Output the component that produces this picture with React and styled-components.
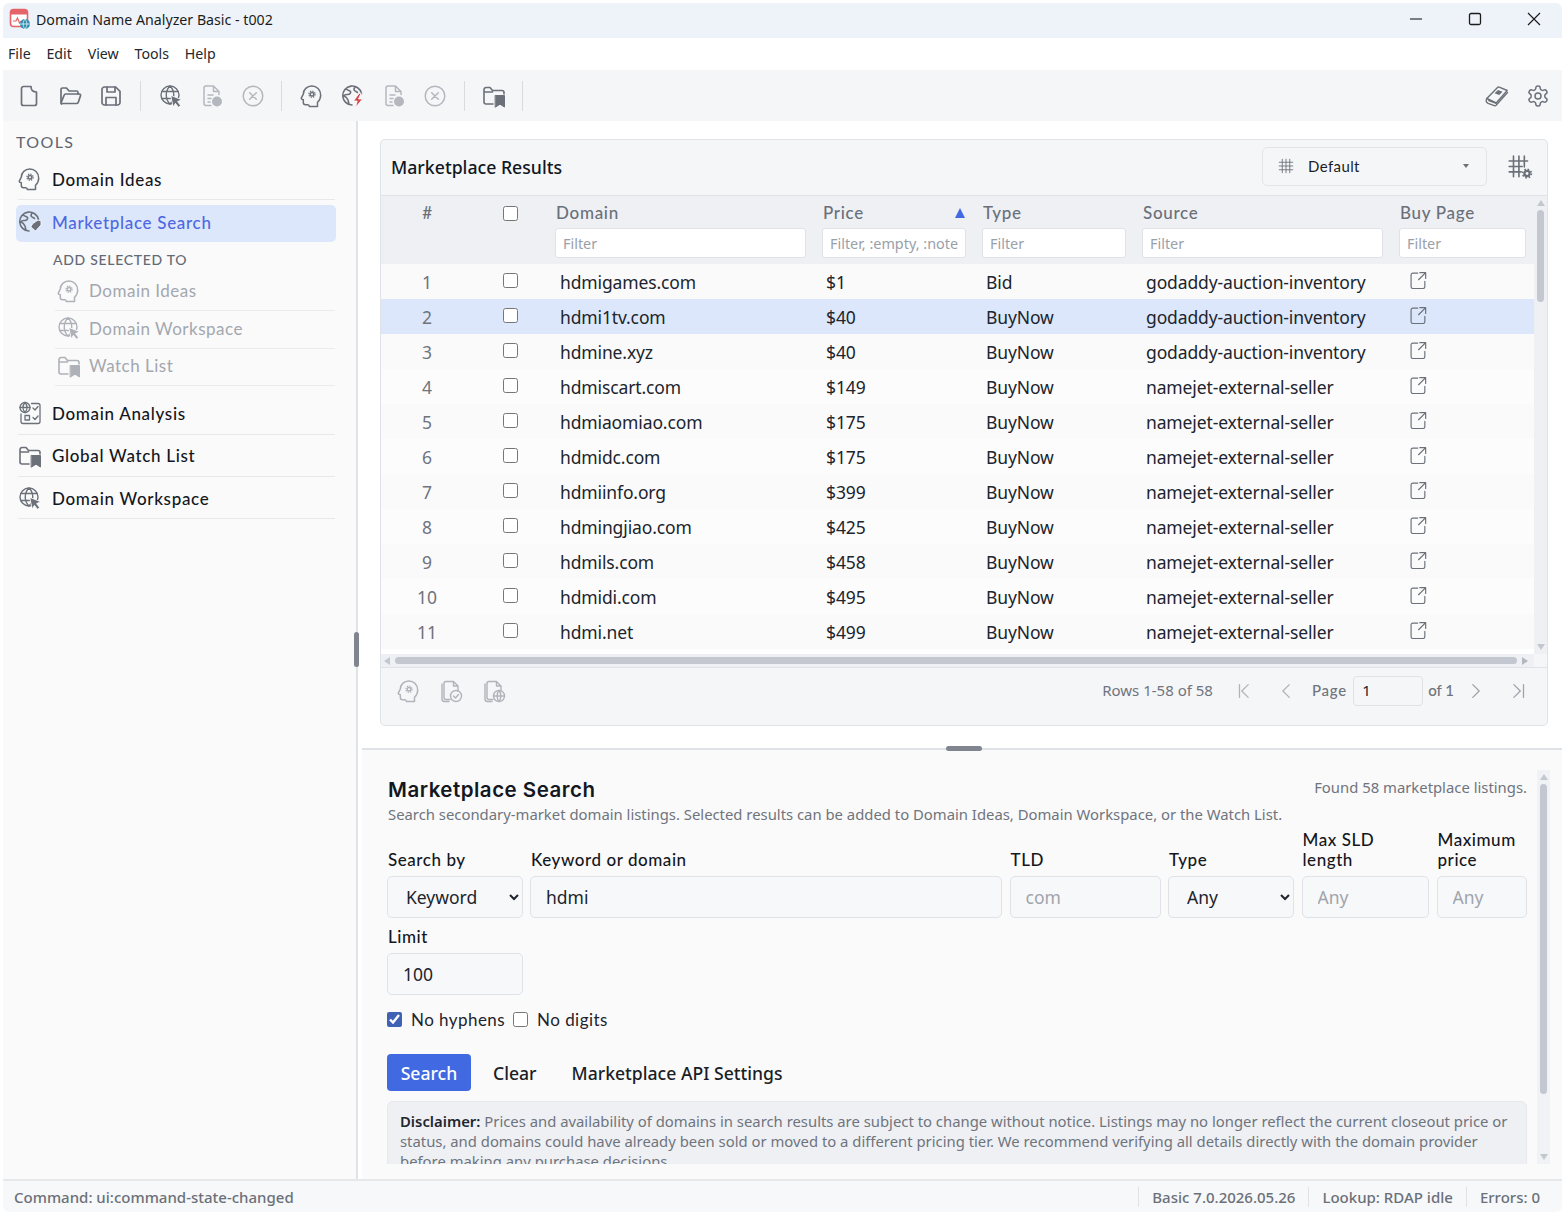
import React from 'react';
import styled, { createGlobalStyle } from 'styled-components';

const GlobalStyle = createGlobalStyle`
  html, body { margin: 0; padding: 0; background: #fff; }
  body { font-family: "Noto Sans", "Open Sans", sans-serif; color: #1f2430; }
  * { box-sizing: border-box; }
`;

const LABEL_FONT = '"Lato", "Noto Sans", sans-serif';

const Window = styled.div`
  width: 1565px;
  height: 1214px;
  padding: 3px 3px 2px 3px;
  display: flex;
  flex-direction: column;
  overflow: hidden;
`;

const TitleBar = styled.div`
  height: 35px;
  flex: none;
  background: #eef3fa;
  display: flex;
  align-items: center;
  padding-left: 6px;
  font-size: 14.2px;
  color: #1c1c1c;
  border-radius: 6px 6px 0 0;
`;

const AppTitle = styled.span`
  margin: -3px 0 0 5px;
  flex: 1;
`;

const WinButton = styled.button`
  width: 59px;
  height: 35px;
  border: 0;
  background: none;
  padding: 0 0 3px 2px;
  display: flex;
  align-items: center;
  justify-content: center;
  color: #1c1c1c;
`;

const MenuBar = styled.div`
  height: 32px;
  flex: none;
  display: flex;
  align-items: center;
  gap: 15.8px;
  padding: 0 0 2px 5px;
  font-size: 14.2px;
  color: #25272c;
`;

const ToolBar = styled.div`
  height: 51px;
  flex: none;
  background: #f5f6f8;
  display: flex;
  align-items: center;
  padding: 0 12px 0 14px;
`;

const ToolButton = styled.span`
  width: 24px;
  height: 24px;
  display: flex;
  align-items: center;
  justify-content: center;
  margin-right: ${p => p.$gap ?? 17}px;
  color: ${p => (p.$off ? '#b4b8be' : '#6b7079')};
`;

const ToolSep = styled.span`
  width: 1px;
  height: 30px;
  background: #d8dbe0;
  margin: 0 ${p => p.$right ?? 18}px 0 0;
`;

const Spacer = styled.span`
  flex: 1;
`;

const Body = styled.div`
  flex: 1;
  min-height: 0;
  display: flex;
`;

const Sidebar = styled.aside`
  width: 355px;
  flex: none;
  background: #fafafb;
  border-right: 2px solid #dfe2e7;
  padding: 11px 21px 0 13px;
  position: relative;
`;

const SideTitle = styled.div`
  font-family: ${LABEL_FONT};
  font-size: 16px;
  letter-spacing: 1.4px;
  color: #5f6670;
  height: 19px;
  line-height: 19px;
  margin-bottom: 12px;
`;

const NavItem = styled.div`
  height: 37.4px;
  display: flex;
  align-items: center;
  gap: 10px;
  padding: 0 0 4px;
  margin: 0 0 5px 2px;
  font-family: ${LABEL_FONT};
  font-size: 17px;
  font-weight: 500;
  letter-spacing: 0.68px;
  color: #14171d;
  border-bottom: 1px solid #e6e8ec;
  svg { color: #6b7079; flex: none; }
  ${p => p.$active && `
    margin-left: 0;
    padding: 0 0 3px 2px;
    width: 320px;
    height: 37px;
    background: #dce7fc;
    border-radius: 5px;
    border-bottom: 0;
    color: #4f67e0;
  `}
`;

const SubHeading = styled.div`
  font-family: ${LABEL_FONT};
  font-size: 14px;
  font-weight: 500;
  letter-spacing: 0.7px;
  color: #646a73;
  height: 20px;
  line-height: 20px;
  margin: 8px 0 3px 37px;
`;

const SubList = styled.div`
  margin: 0 0 11px 39px;
`;

const SubItem = styled.div`
  height: 37.6px;
  display: flex;
  align-items: center;
  gap: 8px;
  padding: 0 0 2px 2px;
  font-family: ${LABEL_FONT};
  font-size: 17px;
  letter-spacing: 0.5px;
  color: #a3a7ae;
  border-bottom: 1px solid #e9ebee;
  svg { color: #aeb2b8; flex: none; }
`;

const SideGrip = styled.span`
  position: absolute;
  right: -3px;
  top: 511px;
  width: 5px;
  height: 35px;
  border-radius: 3px;
  background: #80858f;
`;

const Main = styled.main`
  flex: 1;
  min-width: 0;
  display: flex;
  flex-direction: column;
`;

const TopPane = styled.div`
  height: 627px;
  flex: none;
  padding: 18px 14px 0 22px;
  background: #fff;
`;

const Panel = styled.section`
  height: 587px;
  border: 1px solid #dfe2e7;
  border-radius: 5px;
  background: #f5f6f8;
  display: flex;
  flex-direction: column;
  overflow: hidden;
`;

const PanelHead = styled.header`
  height: 56px;
  flex: none;
  display: flex;
  align-items: center;
  padding: 0 14px 2px 10px;
  border-bottom: 1px solid #dfe2e7;
`;

const PanelTitle = styled.h2`
  margin: 0;
  flex: 1;
  font-size: 17.7px;
  font-weight: 500;
  color: #111722;
`;

const LayoutPicker = styled.div`
  width: 225px;
  height: 39px;
  border: 1px solid #e1e4e8;
  border-radius: 5px;
  display: flex;
  align-items: center;
  padding: 0 17px 2px 14px;
  gap: 13px;
  font-family: ${LABEL_FONT};
  font-size: 15px;
  letter-spacing: 0.4px;
  color: #1b1e25;
  margin-right: 20px;
  svg { color: #6b7079; }
`;

const TinyCaret = styled.span`
  margin-left: auto;
  width: 0;
  height: 0;
  border: 3px solid transparent;
  border-top: 4px solid #6b7079;
  border-bottom: 0;
`;

const GridTool = styled.span`
  display: flex;
  color: #6b7079;
`;

const TableArea = styled.div`
  height: 472px;
  flex: none;
  display: flex;
  border-bottom: 1px solid #dfe2e7;
`;

const TableColumn = styled.div`
  flex: 1;
  min-width: 0;
  display: flex;
  flex-direction: column;
`;

const COLS = '92px 74px 267px 160px 160px 257px 143px';

const HeadRow = styled.div`
  height: 68px;
  flex: none;
  display: grid;
  grid-template-columns: ${COLS};
  background: #eef0f4;
`;

const HeadCell = styled.div`
  padding: 6px 8px 0;
  display: flex;
  flex-direction: column;
  align-items: ${p => (p.$center ? 'center' : 'stretch')};
`;

const HeadLabel = styled.div`
  height: 22px;
  line-height: 22px;
  margin-bottom: 4px;
  padding-left: 1px;
  font-family: ${LABEL_FONT};
  font-size: 17px;
  font-weight: 500;
  letter-spacing: 0.7px;
  color: #6a707a;
  display: flex;
  align-items: center;
  justify-content: space-between;
`;

const SortMark = styled.span`
  width: 0;
  height: 0;
  margin-right: 1px;
  border: 5.5px solid transparent;
  border-bottom: 10px solid #4169e1;
  border-top: 0;
`;

const FilterInput = styled.input`
  width: 100%;
  height: 30px;
  border: 1px solid #dfe2e7;
  border-radius: 3px;
  background: #fff;
  padding: 0 7px;
  font: 14.4px "Noto Sans", sans-serif;
  outline: none;
  &::placeholder { color: #9aa0a8; opacity: 1; }
`;

const Rows = styled.div`
  flex: 1;
  background: #fff;
`;

const Row = styled.div`
  height: 35px;
  display: grid;
  grid-template-columns: ${COLS};
  align-items: center;
  background: ${p => (p.$selected ? '#dce7fb' : p.$odd ? '#fafafb' : '#fcfcfd')};
  font-size: 17.5px;
  letter-spacing: -0.13px;
  color: #20242c;
`;

const RowNum = styled.div`
  text-align: center;
  color: #6f747d;
`;

const CheckCell = styled.div`
  display: flex;
  justify-content: center;
  margin-top: -2px;
`;

const Cell = styled.div`
  padding-left: ${p => p.$pad ?? 12}px;
  white-space: nowrap;
`;

const LinkCell = styled.div`
  padding-left: 18px;
  margin-top: -2px;
  color: #6b7079;
  display: flex;
`;

const Box = styled.input.attrs({ type: 'checkbox' })`
  width: 15px;
  height: 15px;
  margin: 0;
  accent-color: #3f62b5;
`;

const HScroll = styled.div`
  height: 13px;
  flex: none;
  background: #eef0f4;
  display: flex;
  align-items: center;
  padding: 0 6px 0 3px;
  gap: 5px;
`;

const HThumb = styled.span`
  flex: 1;
  height: 7px;
  border-radius: 4px;
  background: #c3c7d0;
`;

const VScroll = styled.div`
  width: ${p => p.$w ?? 13}px;
  flex: none;
  background: ${p => p.$bg ?? '#eef0f4'};
  display: flex;
  flex-direction: column;
  align-items: center;
  padding: 4px 0;
  margin-bottom: ${p => p.$corner ?? 0}px;
`;

const VThumb = styled.span`
  width: 7px;
  height: ${p => p.$h}px;
  margin-top: 4px;
  border-radius: 4px;
  background: #c3c7d0;
`;

const ArrowUp = styled.span`
  width: 0;
  height: 0;
  border: 4.5px solid transparent;
  border-bottom: 6px solid #c3c7d0;
  border-top: 0;
`;

const ArrowDown = styled(ArrowUp)`
  margin-top: auto;
  border-top: 6px solid #c3c7d0;
  border-bottom: 0;
`;

const ArrowLeft = styled.span`
  width: 0;
  height: 0;
  border: 4px solid transparent;
  border-right: 6px solid #c3c7d0;
  border-left: 0;
`;

const ArrowRight = styled.span`
  width: 0;
  height: 0;
  border: 4px solid transparent;
  border-left: 6px solid #b4b8c0;
  border-right: 0;
`;

const PanelFoot = styled.footer`
  flex: 1;
  display: flex;
  align-items: flex-start;
  padding: 8px 18px 0 16px;
  color: #b0b4ba;
`;

const FootIcons = styled.div`
  display: flex;
  gap: 19px;
  flex: 1;
  margin-top: 3px;
`;

const Pager = styled.div`
  display: flex;
  align-items: center;
  height: 30px;
  font-size: 15px;
  color: #6f747d;
`;

const RowCount = styled.span`
  margin-top: -2px;
`;

const PageBtn = styled.span`
  display: flex;
  color: ${p => (p.$off ? '#b0b4ba' : '#9fa3aa')};
  margin-left: ${p => p.$left}px;
`;

const PageLabel = styled.span`
  font-family: ${LABEL_FONT};
  font-weight: 500;
  letter-spacing: ${p => p.$spacing ?? 0.8}px;
  font-size: 15px;
  margin-left: ${p => p.$left}px;
  margin-top: -2px;
`;

const PageInput = styled.input`
  width: 70px;
  height: 30px;
  margin-left: 6px;
  border: 1px solid #dfe2e7;
  border-radius: 4px;
  background: #f5f6f8;
  padding: 0 8px 2px;
  font: 15px "Noto Sans", sans-serif;
  color: #20242c;
  outline: none;
`;

const Splitter = styled.div`
  height: 2px;
  flex: none;
  background: #dfe2e7;
  position: relative;
  margin-left: 4px;
`;

const SplitGrip = styled.span`
  position: absolute;
  left: 584px;
  top: -2px;
  width: 36px;
  height: 5px;
  border-radius: 3px;
  background: #80858f;
`;

const BottomPane = styled.div`
  flex: 1;
  min-height: 0;
  background: #fafafb;
  display: flex;
  padding: 20px 12px 15px 25px;
  margin-left: 4px;
`;

const Form = styled.div`
  flex: 1;
  min-width: 0;
  overflow: hidden;
  padding: 7px 10px 0 0;
`;

const FormHead = styled.div`
  display: flex;
  justify-content: space-between;
  align-items: flex-start;
  height: 26px;
`;

const FormTitle = styled.h2`
  margin: 0 0 0 1px;
  font-family: Inter, sans-serif;
  font-size: 20.5px;
  font-weight: 600;
  letter-spacing: 0.5px;
  line-height: 26px;
  color: #13171f;
`;

const Muted = styled.span`
  font-size: 14.85px;
  line-height: 20px;
  color: #6f747d;
`;

const FormIntro = styled.p`
  margin: 1px 0 0 1px;
  font-size: 14.85px;
  line-height: 20px;
  color: #6f747d;
`;

const FieldRow = styled.div`
  display: grid;
  grid-template-columns: ${p => p.$cols};
  column-gap: 7.5px;
  margin-top: ${p => p.$top}px;
`;

const Field = styled.div`
  display: flex;
  flex-direction: column;
  justify-content: flex-end;
  min-width: 0;
`;

const FieldLabel = styled.label`
  font-family: ${LABEL_FONT};
  font-size: 17px;
  font-weight: 500;
  letter-spacing: 0.55px;
  line-height: 20px;
  color: #14171d;
  padding-left: 1px;
  margin-bottom: 6px;
`;

const controlCss = `
  width: 100%;
  height: 42px;
  border: 1px solid #dfe2e7;
  border-radius: 5px;
  background: #f7f8fa;
  font: 17.5px "Noto Sans", sans-serif;
  color: #20242c;
  outline: none;
  &::placeholder { color: #a0a4ab; opacity: 1; }
`;

const TextBox = styled.input`
  ${controlCss}
  padding: 0 15px;
`;

const SelectBox = styled.select`
  ${controlCss}
  padding: 0 10px 0 14px;
`;

const Checks = styled.div`
  display: flex;
  align-items: center;
  margin-top: 13px;
  height: 22px;
  font-family: ${LABEL_FONT};
  font-size: 17px;
  letter-spacing: 0.45px;
  color: #1f232b;
`;

const CheckLabel = styled.span`
  margin: 0 8px 0 9px;
`;

const Actions = styled.div`
  display: flex;
  align-items: center;
  margin-top: 24px;
  font-size: 17.6px;
  font-weight: 500;
`;

const PrimaryBtn = styled.button`
  width: 84px;
  height: 37px;
  border: 0;
  border-radius: 4px;
  background: #4169e1;
  color: #fff;
  font: 500 17.6px "Noto Sans", sans-serif;
  margin-right: 22px;
`;

const TextBtn = styled.span`
  color: #1a1e26;
  margin-right: 35px;
`;

const Disclaimer = styled.div`
  margin-top: 10px;
  padding: 9px 12px;
  border: 1px solid #e6e8ec;
  border-radius: 6px;
  background: #eef0f4;
  font-size: 14.85px;
  line-height: 20px;
  color: #6f747d;
  strong { color: #22262e; font-weight: 600; }
`;

const StatusBar = styled.footer`
  height: 33px;
  flex: none;
  background: #f7f8fa;
  border-top: 2px solid #e6e8ec;
  display: flex;
  align-items: center;
  padding: 0 22px 0 11px;
  font-size: 15px;
  font-weight: 500;
  color: #6b7079;
  border-radius: 0 0 6px 6px;
`;

const StatusCell = styled.span`
  border-left: 1px solid #dfe2e7;
  height: 20px;
  line-height: 20px;
  padding-left: 13px;
  margin-left: 13px;
`;

// icons
const Svg = ({ size = 24, children, sw = 1.7, ...rest }) => (
  <svg width={size} height={size} viewBox="0 0 24 24" fill="none" stroke="currentColor"
    strokeWidth={sw} strokeLinecap="round" strokeLinejoin="round" {...rest}>
    {children}
  </svg>
);

const HeadGear = ({ size }) => (
  <Svg size={size} sw={1.5}>
    <path d="M17.500 22.500v-4.300c2-1.800 3.200-4 3.200-7C20.700 5.800 16.700 2 11.800 2 7 2 3.300 5.600 3.300 10.200l-1.900 3.700c-.3.600 0 1.100.5 1.300l1.400.5v2.800c0 1.300.9 2.200 2.200 2.200h2.300c1 0 1.500.6 1.500 1.800z" />
    <circle cx="12" cy="10.200" r="2.500" fill="currentColor" stroke="none" />
    <circle cx="12" cy="10.200" r="3.100" strokeDasharray="1.300 1.130" strokeWidth="1.300" strokeLinecap="butt" />
    <circle cx="12" cy="10.200" r="1" fill="#fff" stroke="none" />
  </Svg>
);

const GlobeLines = () => (
  <>
    <circle cx="11" cy="11" r="9" />
    <path d="M11 2c-5 5-5 13 0 18M11 2c5 5 5 13 0 18M3 7.500h16M3 14.500h9" />
  </>
);

const GlobeCursor = ({ size }) => (
  <Svg size={size} sw={1.4}>
    <GlobeLines />
    <path d="M12 11.500l10.800 4.300-4.200 1.800 3 4-2.200 1.700-3-4-2 3.600z" fill="currentColor" stroke="#fff" strokeWidth="0.8" />
  </Svg>
);

const EARTH = 'M20.500 9.500A9.500 9.500 0 1 0 11 21M5 5c1.500 1.500 3.500 1 4.500 2.500S8 10.500 7 10.500 3.500 10 3 12c1.500.5 3 2 4 4 .5 1.500.5 3 1 4M14 3c-1 1.500-1.500 2.500-.5 3.500s2 1 3 2';

const GlobeBolt = ({ size }) => (
  <Svg size={size} sw={1.6}>
    <path d={EARTH} />
    <path d="M18 9.500l-5.500 7.500h3.700L14.500 23.500l7-8.500h-4l2.500-5.500z" fill="#d3484d" stroke="#fff" strokeWidth="0.8" />
  </Svg>
);

const GlobeTag = ({ size }) => (
  <Svg size={size} sw={1.6}>
    <path d={EARTH} />
    <path d="M15 13.500l5-3.500 3 1v4l-5.500 6-4.500-4z" fill="currentColor" stroke="#fff" strokeWidth="0.8" />
  </Svg>
);

const FolderMark = ({ size }) => (
  <Svg size={size} sw={1.6}>
    <path d="M11 20H4a2 2 0 0 1-2-2V5.500a2 2 0 0 1 2-2h4l2.500 3H20a2 2 0 0 1 2 2V10M2.500 8h8" />
    <path d="M13.500 11.500h9v11.500l-4.500-2.800-4.500 2.800z" fill="currentColor" stroke="currentColor" strokeWidth="1" />
  </Svg>
);

const ReportDot = ({ size }) => (
  <Svg size={size} sw={1.5}>
    <path d="M11 21.500H6a2 2 0 0 1-2-2V4a2 2 0 0 1 2-2h7.500L19 7.500v3M13.500 2v5.500H19M8 11h5M8 14.500h3M8 18h2" />
    <circle cx="17" cy="17.500" r="5" fill="currentColor" stroke="none" />
  </Svg>
);

const CircleX = ({ size }) => (
  <Svg size={size} sw={1.5}>
    <circle cx="12" cy="12" r="9.800" />
    <path d="M8.700 8.700l6.600 6.600M15.300 8.700l-6.600 6.600" />
  </Svg>
);

const NewFile = ({ size }) => (
  <Svg size={size}>
    <path d="M14 2.500H6.500a2 2 0 0 0-2 2v15a2 2 0 0 0 2 2h11a2 2 0 0 0 2-2V8c-3.500 0-5.500-2-5.500-5.500z" />
  </Svg>
);

const OpenFolder = ({ size }) => (
  <Svg size={size}>
    <path d="M3 18.500V5.500a1.500 1.500 0 0 1 1.500-1.500h4L11 7h7.500A1.500 1.500 0 0 1 20 8.500V10" />
    <path d="M3 19l3.200-8c.2-.6.7-1 1.400-1h13.600c1 0 1.600.9 1.300 1.800l-2.200 6.500c-.2.700-.8 1.200-1.500 1.200H4.500C3.500 20.500 3 20 3 19z" />
  </Svg>
);

const SaveDisk = ({ size }) => (
  <Svg size={size}>
    <path d="M5.500 3h11.200L21 7.300v11.200a2.500 2.500 0 0 1-2.500 2.500h-13A2.500 2.500 0 0 1 3 18.500v-13A2.500 2.500 0 0 1 5.500 3z" />
    <path d="M8 3v5h8V3M7 21v-7.500h10V21" />
  </Svg>
);

const NoteBook = ({ size }) => (
  <Svg size={size} sw={1.4}>
    <path d="M1.800 14.500L12.500 3.500c.5-.5 1.100-.6 1.700-.3l8 3.300-11 12.500z" />
    <path d="M1.800 14.500c-1.300 2.300-.5 4 1.300 4.800l6.200 2.400c.8.300 1.300 0 1.800-.5L22.500 8.500M3.800 16.500l7 2.700" />
    <path d="M9.500 9.200l3.500-3.200 4.500 1.800-3.300 3.300z" fill="currentColor" stroke="none" />
  </Svg>
);

const Cog = ({ size }) => (
  <Svg size={size} sw={1.5}>
    <path d="M12.200 2h-.4a2 2 0 0 0-2 2v.2a2 2 0 0 1-1 1.700l-.4.300a2 2 0 0 1-2 0l-.2-.100a2 2 0 0 0-2.700.700l-.2.400a2 2 0 0 0 .7 2.700l.2.100a2 2 0 0 1 1 1.700v.5a2 2 0 0 1-1 1.800l-.2.100a2 2 0 0 0-.7 2.700l.2.400a2 2 0 0 0 2.700.7l.2-.100a2 2 0 0 1 2 0l.4.300a2 2 0 0 1 1 1.700v.2a2 2 0 0 0 2 2h.4a2 2 0 0 0 2-2v-.2a2 2 0 0 1 1-1.700l.4-.3a2 2 0 0 1 2 0l.2.100a2 2 0 0 0 2.700-.7l.2-.400a2 2 0 0 0-.7-2.700l-.2-.100a2 2 0 0 1-1-1.800v-.5a2 2 0 0 1 1-1.700l.2-.100a2 2 0 0 0 .7-2.700l-.2-.400a2 2 0 0 0-2.700-.7l-.2.100a2 2 0 0 1-2 0l-.4-.300a2 2 0 0 1-1-1.700V4a2 2 0 0 0-2-2z" />
    <circle cx="12" cy="12" r="3" />
  </Svg>
);

const Hash = ({ size = 18 }) => (
  <Svg size={size} sw={1.2}>
    <path d="M3 7h18M3 12h18M3 17h18M7 3v18M12 3v18M17 3v18" />
  </Svg>
);

const HashCog = () => (
  <Svg size={26} sw={1.5}>
    <path d="M2 6.500h17M2 11.500h12M2 16.500h11M6 2v19M11 2v19M16 2v10" />
    <circle cx="18.500" cy="18" r="3.400" fill="currentColor" stroke="none" />
    <circle cx="18.500" cy="18" r="4" strokeDasharray="1.500 1.640" strokeWidth="1.500" strokeLinecap="butt" />
    <circle cx="18.500" cy="18" r="1.300" fill="#f5f6f8" stroke="none" />
  </Svg>
);

const External = () => (
  <Svg size={20} sw={1.4}>
    <path d="M10.500 2.500H4.500a2 2 0 0 0-2 2v14.500a2 2 0 0 0 2 2H17a2 2 0 0 0 2-2v-6.500M13 2h7v7M20 2l-8.500 8.500" />
  </Svg>
);

const DocCheck = () => (
  <Svg size={24} sw={1.4}>
    <path d="M6 2.500h7.500l4.500 4.500v5M13.500 2.500V7H18M6 2.500c-1 0-2 1-2 2v14c0 1 1 2 2 2h4M2 5v15c0 1.500 1 2.500 2.500 2.500H9" />
    <circle cx="16" cy="17" r="5.500" />
    <path d="M13.500 17l2 2 3-3.500" />
  </Svg>
);

const DocGlobe = () => (
  <Svg size={24} sw={1.4}>
    <path d="M6 2.500h7.500l4.500 4.500v5M13.500 2.500V7H18M6 2.500c-1 0-2 1-2 2v14c0 1 1 2 2 2h4M2 5v15c0 1.500 1 2.500 2.500 2.500H9" />
    <circle cx="16" cy="17" r="5.500" />
    <path d="M10.500 17h11M16 11.500c-2.500 3-2.500 8 0 11M16 11.500c2.500 3 2.500 8 0 11" />
  </Svg>
);

const AnalysisIcon = ({ size }) => (
  <Svg size={size} sw={1.3}>
    <circle cx="7" cy="6.500" r="5" />
    <path d="M2 6.500h10M7 1.500c-2.500 3-2.500 7 0 10M7 1.500c2.500 3 2.500 7 0 10" />
    <path d="M13.500 2.500H20a2 2 0 0 1 2 2v16a2 2 0 0 1-2 2H5a2 2 0 0 1-2-2V13" />
    <path d="M15 7l2 2 3-3.500M15 16.500l2 2 3-3.500" />
    <rect x="7" y="14.500" width="4.500" height="4.500" />
  </Svg>
);

const AppGlyph = styled.svg`
  margin-top: -3px;
  flex: none;
`;

const AppIcon = () => (
  <AppGlyph width="22" height="22" viewBox="0 0 22 22" fill="none">
    <rect x="1.500" y="1.500" width="17" height="17" rx="3" fill="#fff" stroke="#e5646a" strokeWidth="1.600" />
    <path d="M1.500 6.500V4.500a3 3 0 0 1 3-3h11a3 3 0 0 1 3 3v2z" fill="#e5646a" />
    <path d="M4 13h3l1.500-3 2 5 1.500-2" stroke="#e5646a" strokeWidth="1.200" fill="none" />
    <circle cx="16" cy="16" r="5" fill="#2f8fb3" />
    <path d="M11 16h10M16 11c-2.500 3-2.500 7 0 10M16 11c2.500 3 2.500 7 0 10" stroke="#fff" strokeWidth="0.700" />
  </AppGlyph>
);

const Minus = () => (
  <svg width="14" height="14" viewBox="0 0 14 14" stroke="currentColor" strokeWidth="1.100">
    <path d="M1 7h12" />
  </svg>
);

const Square = () => (
  <svg width="14" height="14" viewBox="0 0 14 14" fill="none" stroke="currentColor" strokeWidth="1.300">
    <rect x="1.500" y="1.500" width="11" height="11" rx="1.500" />
  </svg>
);

const Cross = () => (
  <svg width="14" height="14" viewBox="0 0 14 14" stroke="currentColor" strokeWidth="1.200">
    <path d="M1 1l12 12M13 1L1 13" />
  </svg>
);

const First = () => (
  <Svg size={22} sw={1.4}><path d="M15.500 5l-7 7 7 7M6 5v14" /></Svg>
);
const Prev = () => (
  <Svg size={22} sw={1.4}><path d="M14.500 5l-7 7 7 7" /></Svg>
);
const Next = () => (
  <Svg size={22} sw={1.4}><path d="M8.500 5l7 7-7 7" /></Svg>
);
const Last = () => (
  <Svg size={22} sw={1.4}><path d="M7.500 5l7 7-7 7M18 5v14" /></Svg>
);

const listings = [
  ['hdmigames.com', '$1', 'Bid', 'godaddy-auction-inventory'],
  ['hdmi1tv.com', '$40', 'BuyNow', 'godaddy-auction-inventory'],
  ['hdmine.xyz', '$40', 'BuyNow', 'godaddy-auction-inventory'],
  ['hdmiscart.com', '$149', 'BuyNow', 'namejet-external-seller'],
  ['hdmiaomiao.com', '$175', 'BuyNow', 'namejet-external-seller'],
  ['hdmidc.com', '$175', 'BuyNow', 'namejet-external-seller'],
  ['hdmiinfo.org', '$399', 'BuyNow', 'namejet-external-seller'],
  ['hdmingjiao.com', '$425', 'BuyNow', 'namejet-external-seller'],
  ['hdmils.com', '$458', 'BuyNow', 'namejet-external-seller'],
  ['hdmidi.com', '$495', 'BuyNow', 'namejet-external-seller'],
  ['hdmi.net', '$499', 'BuyNow', 'namejet-external-seller'],
];

const App = () => {
  return (
    <Window>
      <GlobalStyle />
      <TitleBar>
        <AppIcon />
        <AppTitle>Domain Name Analyzer Basic - t002</AppTitle>
        <WinButton><Minus /></WinButton>
        <WinButton><Square /></WinButton>
        <WinButton><Cross /></WinButton>
      </TitleBar>
      <MenuBar>
        <span>File</span>
        <span>Edit</span>
        <span>View</span>
        <span>Tools</span>
        <span>Help</span>
      </MenuBar>
      <ToolBar>
        <ToolButton><NewFile /></ToolButton>
        <ToolButton><OpenFolder /></ToolButton>
        <ToolButton $gap={17}><SaveDisk /></ToolButton>
        <ToolSep />
        <ToolButton><GlobeCursor /></ToolButton>
        <ToolButton $off><ReportDot /></ToolButton>
        <ToolButton $off $gap={16}><CircleX /></ToolButton>
        <ToolSep />
        <ToolButton><HeadGear /></ToolButton>
        <ToolButton><GlobeBolt /></ToolButton>
        <ToolButton $off><ReportDot /></ToolButton>
        <ToolButton $off $gap={17}><CircleX /></ToolButton>
        <ToolSep $right={17} />
        <ToolButton $gap={16}><FolderMark /></ToolButton>
        <ToolSep />
        <Spacer />
        <ToolButton $gap={17}><NoteBook /></ToolButton>
        <ToolButton $gap={0}><Cog /></ToolButton>
      </ToolBar>
      <Body>
        <Sidebar>
          <SideTitle>TOOLS</SideTitle>
          <NavItem><HeadGear /> Domain Ideas</NavItem>
          <NavItem $active><GlobeTag /> Marketplace Search</NavItem>
          <SubHeading>ADD SELECTED TO</SubHeading>
          <SubList>
            <SubItem><HeadGear /> Domain Ideas</SubItem>
            <SubItem><GlobeCursor /> Domain Workspace</SubItem>
            <SubItem><FolderMark /> Watch List</SubItem>
          </SubList>
          <NavItem><AnalysisIcon /> Domain Analysis</NavItem>
          <NavItem><FolderMark /> Global Watch List</NavItem>
          <NavItem><GlobeCursor /> Domain Workspace</NavItem>
          <SideGrip />
        </Sidebar>
        <Main>
          <TopPane>
            <Panel>
              <PanelHead>
                <PanelTitle>Marketplace Results</PanelTitle>
                <LayoutPicker>
                  <Hash />
                  Default
                  <TinyCaret />
                </LayoutPicker>
                <GridTool><HashCog /></GridTool>
              </PanelHead>
              <TableArea>
                <TableColumn>
                  <HeadRow>
                    <HeadCell $center><HeadLabel>#</HeadLabel></HeadCell>
                    <HeadCell $center><HeadLabel><Box readOnly /></HeadLabel></HeadCell>
                    <HeadCell>
                      <HeadLabel>Domain</HeadLabel>
                      <FilterInput placeholder="Filter" />
                    </HeadCell>
                    <HeadCell>
                      <HeadLabel>Price <SortMark /></HeadLabel>
                      <FilterInput placeholder="Filter, :empty, :note" />
                    </HeadCell>
                    <HeadCell>
                      <HeadLabel>Type</HeadLabel>
                      <FilterInput placeholder="Filter" />
                    </HeadCell>
                    <HeadCell>
                      <HeadLabel>Source</HeadLabel>
                      <FilterInput placeholder="Filter" />
                    </HeadCell>
                    <HeadCell>
                      <HeadLabel>Buy Page</HeadLabel>
                      <FilterInput placeholder="Filter" />
                    </HeadCell>
                  </HeadRow>
                  <Rows>
                    {listings.map((item, i) => (
                      <Row key={item[0]} $selected={i === 1} $odd={i % 2 === 0}>
                        <RowNum>{i + 1}</RowNum>
                        <CheckCell><Box readOnly /></CheckCell>
                        <Cell $pad={13}>{item[0]}</Cell>
                        <Cell>{item[1]}</Cell>
                        <Cell>{item[2]}</Cell>
                        <Cell>{item[3]}</Cell>
                        <LinkCell><External /></LinkCell>
                      </Row>
                    ))}
                  </Rows>
                  <HScroll>
                    <ArrowLeft />
                    <HThumb />
                    <ArrowRight />
                  </HScroll>
                </TableColumn>
                <VScroll $corner={13}>
                  <ArrowUp />
                  <VThumb $h={92} />
                  <ArrowDown />
                </VScroll>
              </TableArea>
              <PanelFoot>
                <FootIcons>
                  <HeadGear />
                  <DocCheck />
                  <DocGlobe />
                </FootIcons>
                <Pager>
                  <RowCount>Rows 1-58 of 58</RowCount>
                  <PageBtn $off $left={21}><First /></PageBtn>
                  <PageBtn $off $left={20}><Prev /></PageBtn>
                  <PageLabel $left={14}>Page</PageLabel>
                  <PageInput defaultValue="1" />
                  <PageLabel $left={5} $spacing={0}>of 1</PageLabel>
                  <PageBtn $left={11}><Next /></PageBtn>
                  <PageBtn $left={20}><Last /></PageBtn>
                </Pager>
              </PanelFoot>
            </Panel>
          </TopPane>
          <Splitter><SplitGrip /></Splitter>
          <BottomPane>
            <Form>
              <FormHead>
                <FormTitle>Marketplace Search</FormTitle>
                <Muted>Found 58 marketplace listings.</Muted>
              </FormHead>
              <FormIntro>Search secondary-market domain listings. Selected results can be added to Domain Ideas, Domain Workspace, or the Watch List.</FormIntro>
              <FieldRow $cols="135.5px 472px 151px 126px 127.5px 90px" $top={6}>
                <Field>
                  <FieldLabel>Search by</FieldLabel>
                  <SelectBox defaultValue="Keyword"><option>Keyword</option></SelectBox>
                </Field>
                <Field>
                  <FieldLabel>Keyword or domain</FieldLabel>
                  <TextBox defaultValue="hdmi" />
                </Field>
                <Field>
                  <FieldLabel>TLD</FieldLabel>
                  <TextBox placeholder="com" />
                </Field>
                <Field>
                  <FieldLabel>Type</FieldLabel>
                  <SelectBox defaultValue="Any"><option>Any</option></SelectBox>
                </Field>
                <Field>
                  <FieldLabel>Max SLD<br />length</FieldLabel>
                  <TextBox placeholder="Any" />
                </Field>
                <Field>
                  <FieldLabel>Maximum price</FieldLabel>
                  <TextBox placeholder="Any" />
                </Field>
              </FieldRow>
              <FieldRow $cols="136px" $top={9}>
                <Field>
                  <FieldLabel>Limit</FieldLabel>
                  <TextBox defaultValue="100" />
                </Field>
              </FieldRow>
              <Checks>
                <Box defaultChecked />
                <CheckLabel>No hyphens</CheckLabel>
                <Box />
                <CheckLabel>No digits</CheckLabel>
              </Checks>
              <Actions>
                <PrimaryBtn>Search</PrimaryBtn>
                <TextBtn>Clear</TextBtn>
                <TextBtn>Marketplace API Settings</TextBtn>
              </Actions>
              <Disclaimer>
                <strong>Disclaimer:</strong> Prices and availability of domains in search results are subject to change without notice. Listings may no longer reflect the current closeout price or status, and domains could have already been sold or moved to a different pricing tier. We recommend verifying all details directly with the domain provider before making any purchase decisions.
              </Disclaimer>
            </Form>
            <VScroll $bg="#f1f2f5">
              <ArrowUp />
              <VThumb $h={310} />
              <ArrowDown />
            </VScroll>
          </BottomPane>
        </Main>
      </Body>
      <StatusBar>
        <span>Command: ui:command-state-changed</span>
        <Spacer />
        <StatusCell>Basic 7.0.2026.05.26</StatusCell>
        <StatusCell>Lookup: RDAP idle</StatusCell>
        <StatusCell>Errors: 0</StatusCell>
      </StatusBar>
    </Window>
  );
};

export default App;
